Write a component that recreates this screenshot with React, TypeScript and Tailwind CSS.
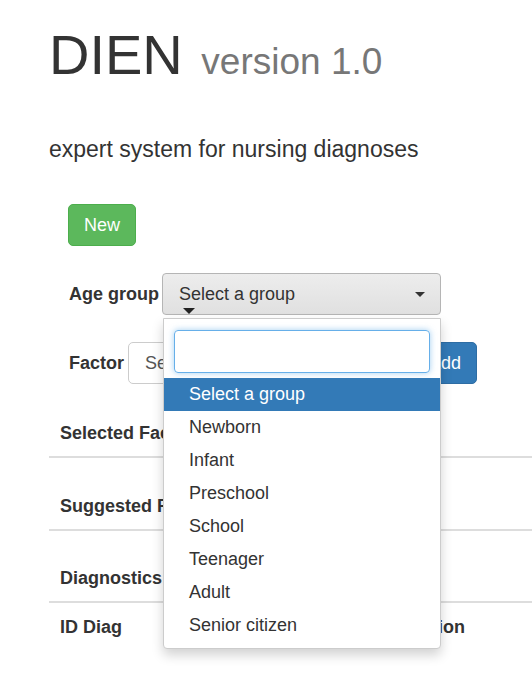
import React from 'react';

const groups = ['Newborn', 'Infant', 'Preschool', 'School', 'Teenager', 'Adult', 'Senior citizen'];

const SectionTitle: React.FC<{ title: string; className?: string }> = ({ title, className }) => (
    <div className={`flex h-[48px] items-center border-b-2 border-[#dddddd] pl-[11px] text-[18px] font-bold ${className ?? ''}`}>
        {title}
    </div>
);

const App: React.FC = () => {
    return (
        <div className="min-h-[694px] overflow-hidden bg-white pl-[49px] text-[#333333]" style={{ fontFamily: '"Liberation Sans", Arial, sans-serif' }}>
            <h1 className="pt-[24px] text-[56px] leading-[1.1]">
                DIEN <span className="ml-[3px] text-[37px] text-[#777777]">version 1.0</span>
            </h1>
            <p className="mt-[46px] text-[23px] leading-[1.5]">expert system for nursing diagnoses</p>

            <button className="ml-[19px] mt-[38px] flex h-[42px] w-[68px] items-center justify-center rounded-[5px] border border-[#4cae4c] bg-[#5cb85c] text-[18px] text-white">
                New
            </button>

            {/* age group */}
            <div className="mt-[27px] flex h-[42px] items-center pl-[20px]">
                <label className="w-[93px] text-[18px] font-bold">Age group</label>
                <div className="relative">
                    <div className="flex h-[42px] w-[279px] items-center justify-between rounded-[4px] border border-[#b5b5b5] bg-gradient-to-b from-[#ededed] to-[#e0e0e0] pl-[16px] pr-[15px] text-[18px] text-[#333333]">
                        <span>Select a group</span>
                        <span className="h-0 w-0 border-l-[5px] border-r-[5px] border-t-[5px] border-l-transparent border-r-transparent border-t-[#333333]" />
                    </div>
                    <span className="absolute left-[21px] top-[35px] h-0 w-0 border-l-[6px] border-r-[6px] border-t-[6px] border-l-transparent border-r-transparent border-t-[#222222]" />

                    {/* open dropdown */}
                    <div className="absolute left-[1px] top-[45px] z-10 w-[278px] rounded-b-[4px] border border-[#cccccc] bg-white pb-[6px] shadow-[0_6px_12px_rgba(0,0,0,0.18)]">
                        <div className="px-[10px] pb-[5px] pt-[11px]">
                            <input className="block h-[43px] w-full rounded-[4px] border border-[#66afe9] px-[10px] text-[18px] shadow-[0_0_6px_rgba(102,175,233,0.6)] outline-none" />
                        </div>
                        <div className="flex h-[33px] items-center bg-[#337ab7] pl-[25px] text-[18px] text-white">Select a group</div>
                        {groups.map(g => (
                            <div key={g} className="flex h-[33px] items-center pl-[25px] text-[18px] text-[#333333]">
                                {g}
                            </div>
                        ))}
                    </div>
                </div>
            </div>

            {/* factor */}
            <div className="mt-[27px] flex h-[42px] items-center pl-[20px]">
                <label className="w-[59px] text-[18px] font-bold">Factor</label>
                <div className="flex h-[42px] w-[285px] items-center rounded-l-[5px] border border-[#cccccc] pl-[16px] text-[18px] text-[#555555]">
                    Select a factor
                </div>
                <button className="flex h-[42px] w-[64px] items-center justify-center rounded-r-[5px] border border-[#2e6da4] bg-[#337ab7] text-[18px] text-white">
                    Add
                </button>
            </div>

            <SectionTitle title="Selected Factors" className="mt-[26px]" />
            <SectionTitle title="Suggested Factors" className="mt-[25px]" />
            <SectionTitle title="Diagnostics" className="mt-[24px]" />

            <div className="grid h-[48px] grid-cols-[306px_1fr] items-center pl-[11px] text-[18px] font-bold">
                <span>ID Diag</span>
                <span>Description</span>
            </div>
        </div>
    );
};

export default App;
